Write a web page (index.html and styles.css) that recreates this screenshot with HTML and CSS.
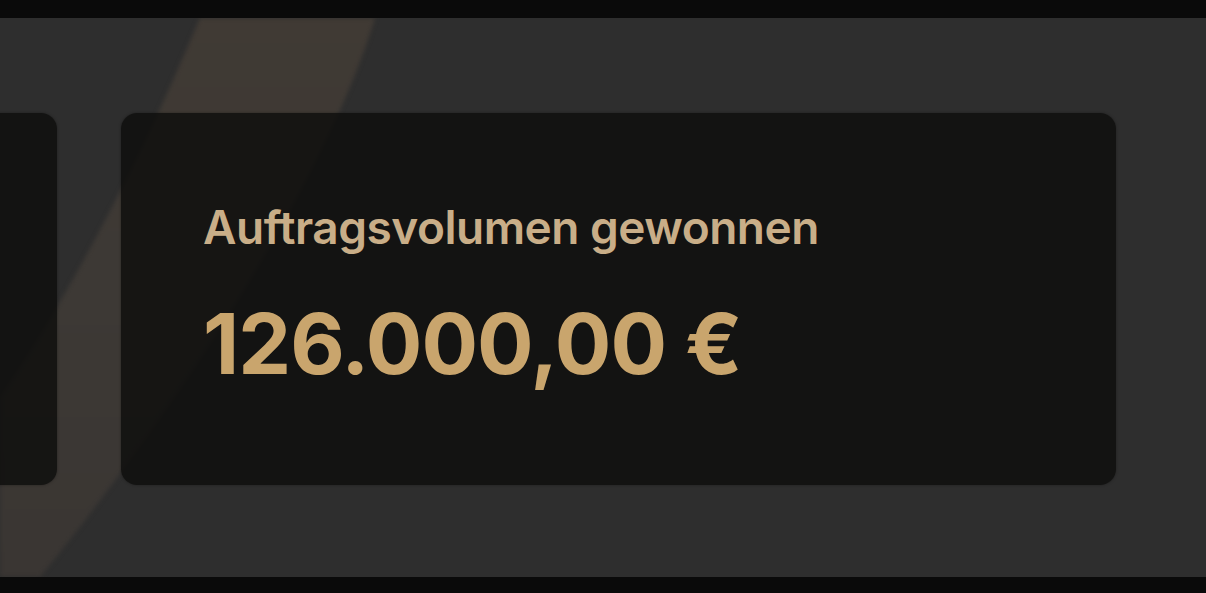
FILE: index.html
```html
<!DOCTYPE html>
<html>

	<head>
		<meta charset="utf-8" />
		<title>Auftragsvolumen</title>
		<link rel="stylesheet" href="styles.css">
	</head>

	<body>
		<div class="screen">
			<!-- heller Schwung im Hintergrund -->
			<svg class="swoosh" width="1206" height="559" viewBox="0 0 1206 559">
				<defs>
					<linearGradient id="swooshFill" x1="0" y1="0" x2="0" y2="1">
						<stop offset="0" stop-color="#403a34" />
						<stop offset="0.5" stop-color="#3d3935" />
						<stop offset="1" stop-color="#3a3633" />
					</linearGradient>
				</defs>
				<path d="M200 0 L375 0 C 345 100 250 300 40 559 L -140 559 C 20 380 120 190 200 0 Z" fill="url(#swooshFill)" />
			</svg>
			<div class="cards">
				<div class="card"></div>
				<div class="card card-wide">
					<p class="label">Auftragsvolumen gewonnen</p>
					<p class="value">126.000,00 €</p>
				</div>
			</div>
		</div>
	</body>

</html>
```

FILE: styles.css
```css
* {
	padding: 0px;
	margin: 0px;
	box-sizing: border-box;
}

body {
	background: #0a0a0a;
	font-family: Inter, "Liberation Sans", sans-serif;
	padding-top: 18px;
}

.screen {
	position: relative;
	height: 559px;
	background: #2e2e2e;
	overflow: hidden;
}

.swoosh {
	position: absolute;
	left: 0;
	top: 0;
	filter: blur(2px);
}

.cards {
	position: relative;
	display: flex;
	justify-content: flex-end;
	gap: 64px;
	padding: 95px 90px 0 0;
}

.card {
	flex: 0 0 300px;
	height: 372px;
	border-radius: 16px;
	background: rgba(14, 13, 12, 0.82);
	box-shadow: 0 0 3px rgba(0, 0, 0, 0.35);
}

.card-wide {
	flex-basis: 995px;
	padding: 86px 0 0 82px;
}

.label {
	font-size: 46px;
	font-weight: 600;
	line-height: 56px;
	color: #c9ae88;
	letter-spacing: -0.5px;
}

.value {
	margin-top: 44px;
	font-size: 84px;
	font-weight: 700;
	line-height: 90px;
	color: #c9a56d;
	letter-spacing: -1px;
}
```
